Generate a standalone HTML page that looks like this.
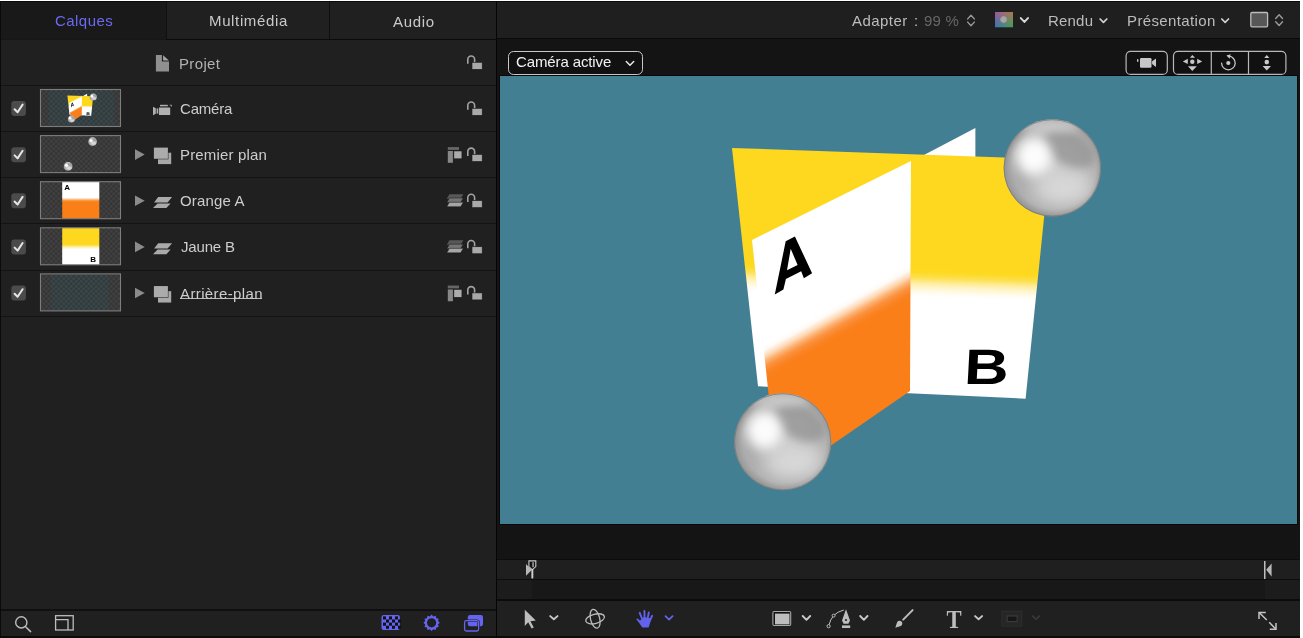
<!DOCTYPE html>
<html><head><meta charset="utf-8">
<style>
*{margin:0;padding:0;box-sizing:border-box}
html,body{width:1303px;height:638px;overflow:hidden;background:#fff}
body{font-family:"Liberation Sans",sans-serif;position:relative}
.a{position:absolute}
.t{position:absolute;white-space:nowrap;font-size:15px;line-height:15px;will-change:transform}
svg.s{position:absolute;left:0;top:0;overflow:visible}
</style></head><body>

<div class="a" style="left:0px;top:1px;width:1300px;height:637px;background:#0a0a0a;"></div>
<div class="a" style="left:1px;top:2px;width:495px;height:634px;background:#202020;"></div>
<div class="a" style="left:1px;top:2px;width:166px;height:38px;background:#191919;"></div>
<div class="a" style="left:1px;top:39px;width:166px;height:1px;background:#171717;"></div>
<div class="a" style="left:166px;top:2px;width:1px;height:38px;background:#101010;"></div>
<div class="a" style="left:329px;top:2px;width:1px;height:37px;background:#0e0e0e;"></div>
<div class="a" style="left:166px;top:39px;width:330px;height:1px;background:#0a0a0a;"></div>
<div class="t" style="left:54.7px;top:13.20px;color:#6a6af2;letter-spacing:0.45px;">Calques</div>
<div class="t" style="left:209px;top:13.40px;color:#c9c9c9;letter-spacing:0.64px;">Multimédia</div>
<div class="t" style="left:393px;top:13.50px;color:#c9c9c9;letter-spacing:0.68px;">Audio</div>
<div class="a" style="left:1px;top:85px;width:495px;height:1px;background:#131313;"></div>
<div class="a" style="left:1px;top:131px;width:495px;height:1px;background:#131313;"></div>
<div class="a" style="left:1px;top:177px;width:495px;height:1px;background:#131313;"></div>
<div class="a" style="left:1px;top:223px;width:495px;height:1px;background:#131313;"></div>
<div class="a" style="left:1px;top:270px;width:495px;height:1px;background:#131313;"></div>
<div class="a" style="left:1px;top:316px;width:495px;height:1px;background:#131313;"></div>
<div class="a" style="left:180px;top:298px;width:82px;height:1px;background:#b8b8b8;"></div>
<div class="t" style="left:179.2px;top:55.50px;color:#b2b2b2;letter-spacing:0.35px;">Projet</div>
<div class="t" style="left:180px;top:101.00px;color:#cdcdcd;letter-spacing:-0.2px;">Caméra</div>
<div class="t" style="left:179.7px;top:147.15px;color:#cdcdcd;letter-spacing:0.16px;">Premier plan</div>
<div class="t" style="left:180px;top:193.30px;color:#cdcdcd;letter-spacing:0.16px;">Orange A</div>
<div class="t" style="left:180.5px;top:239.45px;color:#cdcdcd;letter-spacing:-0.18px;">Jaune B</div>
<div class="t" style="left:179.8px;top:285.60px;color:#cdcdcd;letter-spacing:0.38px;">Arrière-plan</div>
<svg class="s" width="1303" height="638" viewBox="0 0 1303 638">
<defs>
<pattern id="chk" x="0" y="0" width="5" height="5" patternUnits="userSpaceOnUse">
<rect width="5" height="5" fill="#353535"/><rect width="2.5" height="2.5" fill="#404040"/><rect x="2.5" y="2.5" width="2.5" height="2.5" fill="#404040"/>
</pattern>
<pattern id="chkt" x="0" y="0" width="5" height="5" patternUnits="userSpaceOnUse">
<rect width="5" height="5" fill="#313b3e"/><rect width="2.5" height="2.5" fill="#3b4649"/><rect x="2.5" y="2.5" width="2.5" height="2.5" fill="#3b4649"/>
</pattern>

<linearGradient id="gB" gradientUnits="userSpaceOnUse" x1="975" y1="269" x2="974" y2="299">
  <stop offset="0" stop-color="#fdd81e"/><stop offset="0.15" stop-color="#fdd920"/><stop offset="0.35" stop-color="#fde050"/><stop offset="0.5" stop-color="#feeb94"/><stop offset="0.65" stop-color="#fff4c4"/><stop offset="0.85" stop-color="#fffcf0"/><stop offset="1" stop-color="#ffffff"/>
</linearGradient>
<linearGradient id="gA" gradientUnits="userSpaceOnUse" x1="828.8" y1="309.4" x2="843.2" y2="335.6">
  <stop offset="0" stop-color="#ffffff"/><stop offset="0.15" stop-color="#fffaf5"/><stop offset="0.35" stop-color="#fed7b3"/><stop offset="0.5" stop-color="#fcb070"/><stop offset="0.65" stop-color="#fb9240"/><stop offset="0.85" stop-color="#fa8220"/><stop offset="1" stop-color="#fa7f19"/>
</linearGradient>
<radialGradient id="gS" cx="0.52" cy="0.5" r="0.5">
  <stop offset="0" stop-color="#cdcdcd"/><stop offset="0.55" stop-color="#c4c4c4"/><stop offset="0.85" stop-color="#b4b4b4"/><stop offset="1" stop-color="#959595"/>
</radialGradient>
<filter id="bl5" x="-50%" y="-50%" width="200%" height="200%"><feGaussianBlur stdDeviation="4"/></filter>
<filter id="bl6" x="-50%" y="-50%" width="200%" height="200%"><feGaussianBlur stdDeviation="6"/></filter>
<filter id="bl8" x="-50%" y="-50%" width="200%" height="200%"><feGaussianBlur stdDeviation="8"/></filter>
<radialGradient id="gH" cx="0.5" cy="0.5" r="0.5">
  <stop offset="0" stop-color="#ffffff" stop-opacity="1"/><stop offset="0.5" stop-color="#ffffff" stop-opacity="0.6"/><stop offset="1" stop-color="#ffffff" stop-opacity="0"/>
</radialGradient>
<radialGradient id="gD" cx="0.5" cy="0.5" r="0.5">
  <stop offset="0" stop-color="#8a8a8a" stop-opacity="0.85"/><stop offset="0.6" stop-color="#9a9a9a" stop-opacity="0.5"/><stop offset="1" stop-color="#a0a0a0" stop-opacity="0"/>
</radialGradient>
<g id="panels">
<polygon points="975.4,128 975.4,166 903,166" fill="#ffffff"/>
<polygon points="732,148 1050,159 1025.6,398.7 758,386.3" fill="url(#gB)"/>
<polygon points="752,240 911,161 910,391 778,482" fill="url(#gA)"/>
<path fill-rule="evenodd" fill="#000" d="M785.7,241.3 L794.9,236.5 L812.1,273.3 L803.9,278.3 L801.2,271.2 L785.9,279 L783.4,289.6 L774.8,294.6 Z M790.7,248.8 L797.6,264.9 L787,270.2 Z"/>
<text x="0" y="0" font-family="Liberation Sans" font-weight="bold" font-size="49.7" fill="#000" transform="translate(963.4,384) scale(1.24,1) skewX(-2.5)">B</text>
</g><g id="spheres"><g id="sphA">
<clipPath id="cla"><circle cx="1052.3" cy="167.9" r="48.6"/></clipPath>
<circle cx="1052.3" cy="167.9" r="48.6" fill="url(#gS)"/>
<g clip-path="url(#cla)">
<ellipse cx="1065.91" cy="188.31" rx="26.73" ry="15.55" fill="#dcdcdc" filter="url(#bl8)" opacity="0.8"/>
<ellipse cx="1017.31" cy="177.62" rx="12.15" ry="21.87" fill="#a4a4a4" filter="url(#bl8)" opacity="0.6"/>
<ellipse cx="1069.80" cy="148.46" rx="28.19" ry="16.52" transform="rotate(28 1069.80 148.46)" fill="#929292" filter="url(#bl5)" opacity="0.75"/>
<ellipse cx="1047.44" cy="125.13" rx="34.02" ry="7.78" fill="#d2d2d2" filter="url(#bl5)" opacity="0.7"/>
<ellipse cx="1033.83" cy="156.24" rx="17.50" ry="18.47" fill="#ffffff" filter="url(#bl6)" opacity="0.95"/>
</g>
<circle cx="1052.3" cy="167.9" r="48.20" fill="none" stroke="#6a6a6a" stroke-width="0.8" opacity="0.7"/>
</g><g id="sphB">
<clipPath id="clb"><circle cx="782.7" cy="441.8" r="48.5"/></clipPath>
<circle cx="782.7" cy="441.8" r="48.5" fill="url(#gS)"/>
<g clip-path="url(#clb)">
<ellipse cx="796.28" cy="462.17" rx="26.68" ry="15.52" fill="#dcdcdc" filter="url(#bl8)" opacity="0.8"/>
<ellipse cx="747.78" cy="451.50" rx="12.12" ry="21.82" fill="#a4a4a4" filter="url(#bl8)" opacity="0.6"/>
<ellipse cx="800.16" cy="422.40" rx="28.13" ry="16.49" transform="rotate(28 800.16 422.40)" fill="#929292" filter="url(#bl5)" opacity="0.75"/>
<ellipse cx="777.85" cy="399.12" rx="33.95" ry="7.76" fill="#d2d2d2" filter="url(#bl5)" opacity="0.7"/>
<ellipse cx="764.27" cy="430.16" rx="17.46" ry="18.43" fill="#ffffff" filter="url(#bl6)" opacity="0.95"/>
</g>
<circle cx="782.7" cy="441.8" r="48.10" fill="none" stroke="#6a6a6a" stroke-width="0.8" opacity="0.7"/>
</g></g></defs>
<path d="M155.9 54.9 H161.9 V61.5 H169 V71.6 H155.9 Z" fill="#909090"/>
<path d="M163.1 55.3 L168.9 60.6 H163.1 Z" fill="#a6a6a6"/>
<path d="M467.8 63.8 V59.4 A3.4 3.4 0 0 1 474.6 59.4 V62.3" fill="none" stroke="#a2a2a2" stroke-width="1.6"/>
<rect x="472" y="62.3" width="10.2" height="7" fill="#a9a9a9" stroke="#1a1a1a" stroke-width="0.6"/>
<path d="M467.8 109.8 V105.39999999999999 A3.4 3.4 0 0 1 474.6 105.39999999999999 V108.3" fill="none" stroke="#a2a2a2" stroke-width="1.6"/>
<rect x="472" y="108.3" width="10.2" height="7" fill="#a9a9a9" stroke="#1a1a1a" stroke-width="0.6"/>
<rect x="11.3" y="101.00" width="14.6" height="15" rx="3" fill="#4b4b4b"/>
<path d="M14.6 109.20 L17.6 112.20 L22.6 104.60" fill="none" stroke="#e6e6e6" stroke-width="2" stroke-linecap="round" stroke-linejoin="round"/>
<rect x="40.5" y="89.50" width="80" height="37" fill="url(#chk)"/>
<path d="M467.8 155.95 V151.54999999999998 A3.4 3.4 0 0 1 474.6 151.54999999999998 V154.45" fill="none" stroke="#a2a2a2" stroke-width="1.6"/>
<rect x="472" y="154.45" width="10.2" height="7" fill="#a9a9a9" stroke="#1a1a1a" stroke-width="0.6"/>
<rect x="11.3" y="147.15" width="14.6" height="15" rx="3" fill="#4b4b4b"/>
<path d="M14.6 155.35 L17.6 158.35 L22.6 150.75" fill="none" stroke="#e6e6e6" stroke-width="2" stroke-linecap="round" stroke-linejoin="round"/>
<rect x="40.5" y="135.65" width="80" height="37" fill="url(#chk)"/>
<path d="M135 149.30 L144.7 154.60 L135 159.90 Z" fill="#8c8c8c"/>
<path d="M467.8 202.1 V197.7 A3.4 3.4 0 0 1 474.6 197.7 V200.6" fill="none" stroke="#a2a2a2" stroke-width="1.6"/>
<rect x="472" y="200.6" width="10.2" height="7" fill="#a9a9a9" stroke="#1a1a1a" stroke-width="0.6"/>
<rect x="11.3" y="193.30" width="14.6" height="15" rx="3" fill="#4b4b4b"/>
<path d="M14.6 201.50 L17.6 204.50 L22.6 196.90" fill="none" stroke="#e6e6e6" stroke-width="2" stroke-linecap="round" stroke-linejoin="round"/>
<rect x="40.5" y="181.80" width="80" height="37" fill="url(#chk)"/>
<path d="M135 195.45 L144.7 200.75 L135 206.05 Z" fill="#8c8c8c"/>
<path d="M467.8 248.25 V243.85 A3.4 3.4 0 0 1 474.6 243.85 V246.75" fill="none" stroke="#a2a2a2" stroke-width="1.6"/>
<rect x="472" y="246.75" width="10.2" height="7" fill="#a9a9a9" stroke="#1a1a1a" stroke-width="0.6"/>
<rect x="11.3" y="239.45" width="14.6" height="15" rx="3" fill="#4b4b4b"/>
<path d="M14.6 247.65 L17.6 250.65 L22.6 243.05" fill="none" stroke="#e6e6e6" stroke-width="2" stroke-linecap="round" stroke-linejoin="round"/>
<rect x="40.5" y="227.95" width="80" height="37" fill="url(#chk)"/>
<path d="M135 241.60 L144.7 246.90 L135 252.20 Z" fill="#8c8c8c"/>
<path d="M467.8 294.4 V290.0 A3.4 3.4 0 0 1 474.6 290.0 V292.9" fill="none" stroke="#a2a2a2" stroke-width="1.6"/>
<rect x="472" y="292.9" width="10.2" height="7" fill="#a9a9a9" stroke="#1a1a1a" stroke-width="0.6"/>
<rect x="11.3" y="285.60" width="14.6" height="15" rx="3" fill="#4b4b4b"/>
<path d="M14.6 293.80 L17.6 296.80 L22.6 289.20" fill="none" stroke="#e6e6e6" stroke-width="2" stroke-linecap="round" stroke-linejoin="round"/>
<rect x="40.5" y="274.10" width="80" height="37" fill="url(#chk)"/>
<path d="M135 287.75 L144.7 293.05 L135 298.35 Z" fill="#8c8c8c"/>
<path d="M153 106.8 L155.8 108.2 V113.8 L153 115.2 Z" fill="#b0b0b0"/>
<rect x="156.6" y="108.4" width="1.6" height="5.2" fill="#b0b0b0"/>
<rect x="158.9" y="107.5" width="11.3" height="7.6" rx="0.6" fill="#b0b0b0"/>
<rect x="160" y="104.8" width="7.8" height="1.5" fill="#b0b0b0"/>
<path d="M169 104.8 H172 V107 Z" fill="#8a8a8a"/>
<rect x="158" y="152.70" width="13.2" height="11.4" fill="#a8a8a8"/>
<rect x="153.4" y="147.10" width="15" height="12.2" fill="#202020"/>
<rect x="153.9" y="147.60" width="14" height="11.2" fill="#ababab"/>
<path d="M154.1 202.40 L158.2 197.00 H172.1 L167.6 202.40 Z" fill="#aaaaaa"/>
<path d="M153 208.00 L157.6 203.40 H170.6 L166.4 208.00 Z" fill="#aaaaaa"/>
<path d="M154.1 248.55 L158.2 243.15 H172.1 L167.6 248.55 Z" fill="#aaaaaa"/>
<path d="M153 254.15 L157.6 249.55 H170.6 L166.4 254.15 Z" fill="#aaaaaa"/>
<rect x="158" y="291.15" width="13.2" height="11.4" fill="#a8a8a8"/>
<rect x="153.4" y="285.55" width="15" height="12.2" fill="#202020"/>
<rect x="153.9" y="286.05" width="14" height="11.2" fill="#ababab"/>
<rect x="447.8" y="147.10" width="11.2" height="2.8" fill="#666"/>
<rect x="447.8" y="151.00" width="5.1" height="11.8" fill="#888"/>
<rect x="453.9" y="151.00" width="8" height="7.8" fill="#acacac" stroke="#151515" stroke-width="0.5"/>
<path d="M446.8 198.70 L449.4 194.20 H463.3 L460.7 198.70 Z" fill="#585858"/>
<path d="M446.8 202.50 L449.4 198.00 H463.3 L460.7 202.50 Z" fill="#747474" stroke="#1a1a1a" stroke-width="0.5"/>
<path d="M446.8 206.70 L449.4 202.20 H463.3 L460.7 206.70 Z" fill="#a6a6a6" stroke="#1a1a1a" stroke-width="0.5"/>
<path d="M446.8 244.85 L449.4 240.35 H463.3 L460.7 244.85 Z" fill="#585858"/>
<path d="M446.8 248.65 L449.4 244.15 H463.3 L460.7 248.65 Z" fill="#747474" stroke="#1a1a1a" stroke-width="0.5"/>
<path d="M446.8 252.85 L449.4 248.35 H463.3 L460.7 252.85 Z" fill="#a6a6a6" stroke="#1a1a1a" stroke-width="0.5"/>
<rect x="447.8" y="285.55" width="11.2" height="2.8" fill="#666"/>
<rect x="447.8" y="289.45" width="5.1" height="11.8" fill="#888"/>
<rect x="453.9" y="289.45" width="8" height="7.8" fill="#acacac" stroke="#151515" stroke-width="0.5"/>
<circle cx="21.3" cy="622.4" r="5.6" fill="none" stroke="#bdbdbd" stroke-width="1.4"/>
<path d="M25.6 626.8 L30.6 631.6" stroke="#bdbdbd" stroke-width="1.5" stroke-linecap="round"/>
<rect x="55.6" y="615.7" width="17.6" height="14.3" fill="none" stroke="#bdbdbd" stroke-width="1.3"/>
<path d="M55.6 619.7 H68 V630" fill="none" stroke="#bdbdbd" stroke-width="1.3"/>
<rect x="381.5" y="615" width="18.4" height="15" rx="2.2" fill="#6464f0"/>
<rect x="383.00" y="616.40" width="3" height="3.1" fill="#111"/>
<rect x="389.00" y="616.40" width="3" height="3.1" fill="#111"/>
<rect x="395.00" y="616.40" width="3" height="3.1" fill="#111"/>
<rect x="386.00" y="619.50" width="3" height="3.1" fill="#111"/>
<rect x="392.00" y="619.50" width="3" height="3.1" fill="#111"/>
<rect x="398.00" y="619.50" width="3" height="3.1" fill="#111"/>
<rect x="383.00" y="622.60" width="3" height="3.1" fill="#111"/>
<rect x="389.00" y="622.60" width="3" height="3.1" fill="#111"/>
<rect x="395.00" y="622.60" width="3" height="3.1" fill="#111"/>
<rect x="386.00" y="625.70" width="3" height="3.1" fill="#111"/>
<rect x="392.00" y="625.70" width="3" height="3.1" fill="#111"/>
<rect x="398.00" y="625.70" width="3" height="3.1" fill="#111"/>
<polygon points="439.80,622.80 437.98,624.51 438.70,626.90 436.27,627.47 435.70,629.90 433.31,629.18 431.60,631.00 429.89,629.18 427.50,629.90 426.93,627.47 424.50,626.90 425.22,624.51 423.40,622.80 425.22,621.09 424.50,618.70 426.93,618.13 427.50,615.70 429.89,616.42 431.60,614.60 433.31,616.42 435.70,615.70 436.27,618.13 438.70,618.70 437.98,621.09" fill="#6464f0"/>
<circle cx="431.6" cy="622.8" r="4.6" fill="#202020"/>
<rect x="467.8" y="615" width="15.2" height="11.2" rx="2.2" fill="#6464f0"/>
<rect x="464.6" y="620.6" width="14" height="10.4" rx="1.8" fill="none" stroke="#202020" stroke-width="2.4"/>
<rect x="464.6" y="620.6" width="14" height="10.4" rx="1.8" fill="none" stroke="#6464f0" stroke-width="1.3"/>
<rect x="48.8" y="89.8" width="65.2" height="36.7" fill="url(#chkt)"/>
<use href="#panels" transform="translate(48.6,89.6) scale(0.081)  translate(-500,-76)"/>
<g transform="translate(93.3,97) scale(0.074) translate(-1052.3,-167.9)"><use href="#sphA"/></g>
<g transform="translate(71.4,119.1) scale(0.074) translate(-782.7,-441.8)"><use href="#sphB"/></g>
<g transform="translate(92.6,141.6) scale(0.09) translate(-1052.3,-167.9)"><use href="#sphA"/></g>
<g transform="translate(68.1,166.4) scale(0.092) translate(-782.7,-441.8)"><use href="#sphB"/></g>
<defs><linearGradient id="tgA" x1="0" y1="0" x2="0" y2="1"><stop offset="0" stop-color="#fff"/><stop offset="0.43" stop-color="#fff"/><stop offset="0.52" stop-color="#fa8a2a"/><stop offset="0.56" stop-color="#fa7f19"/><stop offset="1" stop-color="#fa7f19"/></linearGradient>
<linearGradient id="tgB" x1="0" y1="0" x2="0" y2="1"><stop offset="0" stop-color="#fdd81e"/><stop offset="0.45" stop-color="#fdd81e"/><stop offset="0.54" stop-color="#fff5d0"/><stop offset="0.58" stop-color="#fff"/><stop offset="1" stop-color="#fff"/></linearGradient></defs>
<rect x="62.2" y="181.7" width="37.1" height="37" fill="url(#tgA)"/>
<text x="64.3" y="190.2" font-family="Liberation Sans" font-weight="bold" font-size="8" fill="#000">A</text>
<rect x="62.2" y="227.8" width="37.1" height="37" fill="url(#tgB)"/>
<text x="90.2" y="262.3" font-family="Liberation Sans" font-weight="bold" font-size="8" fill="#000">B</text>
<rect x="50.9" y="274.8" width="58" height="35.6" fill="url(#chkt)"/>
<rect x="40.5" y="89.50" width="80" height="37" fill="none" stroke="#7d7d7d" stroke-width="1.1"/>
<rect x="40.5" y="135.60" width="80" height="37" fill="none" stroke="#7d7d7d" stroke-width="1.1"/>
<rect x="40.5" y="181.70" width="80" height="37" fill="none" stroke="#7d7d7d" stroke-width="1.1"/>
<rect x="40.5" y="227.80" width="80" height="37" fill="none" stroke="#7d7d7d" stroke-width="1.1"/>
<rect x="40.5" y="273.90" width="80" height="37" fill="none" stroke="#7d7d7d" stroke-width="1.1"/>
</svg>
<div class="a" style="left:1px;top:609px;width:495px;height:2px;background:#101010;"></div>
<div class="a" style="left:496px;top:2px;width:1px;height:636px;background:#050505;"></div>
<div class="a" style="left:497px;top:2px;width:803px;height:36px;background:#1f1f1f;"></div>
<div class="a" style="left:497px;top:39px;width:803px;height:520px;background:#141414;"></div>
<div class="a" style="left:499px;top:75px;width:799px;height:450px;background:#0c0808;"></div>
<div class="a" style="left:500px;top:76px;width:797px;height:448px;background:#437f93;"></div>
<svg class="s" width="1303" height="638" viewBox="0 0 1303 638"><defs><clipPath id="cvclip"><rect x="500" y="76" width="797" height="448"/></clipPath></defs><g clip-path="url(#cvclip)"><use href="#panels"/><use href="#spheres"/></g></svg>
<div class="t" style="left:852px;top:13.40px;color:#bcbcbc;letter-spacing:0.45px;">Adapter</div>
<div class="t" style="left:913.5px;top:13.40px;color:#bcbcbc;letter-spacing:0px;">:</div>
<div class="t" style="left:923.5px;top:13.40px;color:#676767;letter-spacing:0.2px;">99 %</div>
<div class="t" style="left:1047.8px;top:13.10px;color:#bcbcbc;letter-spacing:0.2px;">Rendu</div>
<div class="t" style="left:1126.6px;top:13.10px;color:#bcbcbc;letter-spacing:0.38px;">Présentation</div>
<div class="a" style="left:508.4px;top:51px;width:134.8px;height:24px;border:1.4px solid #c8c8c8;border-radius:5.5px;background:#111"></div>
<div class="t" style="left:516.3px;top:54.40px;color:#f2f2f2;letter-spacing:-0.12px;">Caméra active</div>
<div class="a" style="left:497px;top:559px;width:803px;height:1px;background:#0c0c0c;"></div>
<div class="a" style="left:497px;top:560px;width:803px;height:19px;background:#1f1f1f;"></div>
<div class="a" style="left:497px;top:579px;width:803px;height:1px;background:#0c0c0c;"></div>
<div class="a" style="left:497px;top:580px;width:803px;height:19px;background:#181818;"></div>
<div class="a" style="left:497px;top:599px;width:803px;height:2px;background:#0c0c0c;"></div>
<div class="a" style="left:497px;top:601px;width:803px;height:35px;background:#202020;"></div>
<svg class="s" width="1303" height="638" viewBox="0 0 1303 638"><path d="M967.70 18.90 L971.00 15.20 L974.30 18.90 M967.70 22.10 L971.00 25.80 L974.30 22.10" fill="none" stroke="#9a9a9a" stroke-width="1.4" stroke-linecap="round" stroke-linejoin="round"/>
<defs><linearGradient id="sw1" x1="0" y1="0" x2="1" y2="0"><stop offset="0" stop-color="#9a5a98"/><stop offset="1" stop-color="#a87a4e"/></linearGradient><linearGradient id="sw2" x1="0" y1="0" x2="1" y2="0"><stop offset="0" stop-color="#3a74b8"/><stop offset="1" stop-color="#48a050"/></linearGradient><linearGradient id="swm" x1="0" y1="0" x2="0" y2="1"><stop offset="0" stop-color="#fff"/><stop offset="1" stop-color="#000"/></linearGradient><mask id="swmask"><rect x="995" y="12" width="18" height="15.3" fill="url(#swm)"/></mask><radialGradient id="swc" cx="0.5" cy="0.5" r="0.5"><stop offset="0" stop-color="#a8a8a8"/><stop offset="0.75" stop-color="#a2a2a2"/><stop offset="1" stop-color="#a2a2a2" stop-opacity="0"/></radialGradient></defs>
<rect x="995" y="12" width="18" height="15.3" fill="url(#sw2)"/>
<rect x="995" y="12" width="18" height="15.3" fill="url(#sw1)" mask="url(#swmask)"/>
<circle cx="1003.6" cy="19.5" r="3.8" fill="url(#swc)"/>
<path d="M1020.80 18.10 L1024.40 21.90 L1028.00 18.10" fill="none" stroke="#d8d8d8" stroke-width="2" stroke-linecap="round" stroke-linejoin="round"/>
<path d="M1100.10 19.00 L1103.45 22.40 L1106.80 19.00" fill="none" stroke="#d0d0d0" stroke-width="1.75" stroke-linecap="round" stroke-linejoin="round"/>
<path d="M1221.80 19.00 L1225.15 22.40 L1228.50 19.00" fill="none" stroke="#d0d0d0" stroke-width="1.75" stroke-linecap="round" stroke-linejoin="round"/>
<rect x="1250.8" y="12.5" width="16.8" height="14.3" rx="1.2" fill="#575757" stroke="#bdbdbd" stroke-width="1.3"/>
<path d="M1275.70 18.50 L1279.10 14.70 L1282.50 18.50 M1275.70 21.70 L1279.10 25.50 L1282.50 21.70" fill="none" stroke="#9a9a9a" stroke-width="1.4" stroke-linecap="round" stroke-linejoin="round"/>
<path d="M626.30 61.50 L630.00 65.30 L633.70 61.50" fill="none" stroke="#e8e8e8" stroke-width="1.5" stroke-linecap="round" stroke-linejoin="round"/>
<rect x="1126.1" y="51.4" width="41.2" height="23" rx="4.5" fill="#111" stroke="#b8b8b8" stroke-width="1.2"/>
<rect x="1173.5" y="51.4" width="112.4" height="23" rx="4.5" fill="#111" stroke="#b8b8b8" stroke-width="1.2"/>
<path d="M1211.3 51.4 V74.4 M1248.5 51.4 V74.4" stroke="#b8b8b8" stroke-width="1.2"/>
<rect x="1140" y="58" width="11.5" height="9.8" rx="1.2" fill="#c8c8c8"/>
<path d="M1152.1 61.2 L1156 58.4 V67.1 L1152.1 64 Z" fill="#c8c8c8"/>
<rect x="1137" y="59.2" width="1.4" height="2.6" fill="#c8c8c8"/>
<circle cx="1192.3" cy="61.8" r="2.2" fill="#c8c8c8"/>
<path d="M1189.9 57.8 L1192.3 55.1 L1195.1 57.8 Z M1188 66.3 L1192.3 71 L1196.8 66.3 Z M1187.8 58.8 L1182.8 61.5 L1187.8 64 Z M1197.2 58.8 L1202.2 61.5 L1197.2 64 Z" fill="#c8c8c8"/>
<circle cx="1228.3" cy="63" r="2.1" fill="#c8c8c8"/>
<path d="M1221.6 63.2 A6.8 6.8 0 1 0 1228.9 56.2" fill="none" stroke="#c8c8c8" stroke-width="1.3" stroke-linecap="round"/>
<path d="M1226.4 55.6 L1230.6 54.2 L1229.6 58.8 Z" fill="#c8c8c8"/>
<circle cx="1266.8" cy="62.1" r="2.3" fill="#c8c8c8"/>
<path d="M1264.2 57.9 L1266.8 54.9 L1269.3999999999999 57.9 Z M1262.6 65.9 L1266.8 70.5 L1271.0 65.9 Z" fill="#c8c8c8"/>
<rect x="497" y="580" width="35" height="19" fill="#1c1c1c"/>
<rect x="1265" y="580" width="35" height="19" fill="#1c1c1c"/>
<path d="M526 564 L531.8 570 L526 575.8 Z" fill="#b8b8b8"/>
<path d="M528.9 560.9 H535.8 V566.6 L532.3 569.8 L528.9 566.6 Z" fill="#151515" stroke="#c8c8c8" stroke-width="1.1"/>
<rect x="532.2" y="562.2" width="1.8" height="5" fill="#8a8a8a"/>
<rect x="531.4" y="568.8" width="1.9" height="9.8" rx="0.9" fill="#d0d0d0"/>
<rect x="1264" y="561" width="1.5" height="18" fill="#c0c0c0"/>
<path d="M1271.6 563.4 L1266.2 569.8 L1271.6 576.4 Z" fill="#b8b8b8"/>
<path d="M524.8 609.8 L535.8 620.6 L530.4 621.2 L533.8 627.6 L531.6 628.6 L528.2 622.2 L524.8 626 Z" fill="#bdbdbd"/>
<path d="M550.20 616.10 L553.85 619.30 L557.50 616.10" fill="none" stroke="#c8c8c8" stroke-width="1.9" stroke-linecap="round" stroke-linejoin="round"/>
<ellipse cx="595.1" cy="618.8" rx="9.6" ry="4.6" transform="rotate(-14 595.1 618.8)" fill="none" stroke="#bdbdbd" stroke-width="1.3"/>
<ellipse cx="595.1" cy="618.8" rx="9.6" ry="4.6" transform="rotate(76 595.1 618.8)" fill="none" stroke="#bdbdbd" stroke-width="1.3"/>
<path d="M640.2 620.5 L643 617.5 H646.5 L650 618.3 L651.4 619 L648.6 627.4 H642.3 L638.2 621.6 Z" fill="#6262ec"/>
<path d="M637.4 619.4 L641.6 623.6 M639.7 612.8 L642.2 619 M644.4 611 L644.6 618 M648.8 612.5 L647.6 618.5 M652.1 615.8 L649.8 620.5" stroke="#6262ec" stroke-width="1.9" stroke-linecap="round"/>
<path d="M665.50 616.10 L669.05 619.60 L672.60 616.10" fill="none" stroke="#6262ec" stroke-width="1.8" stroke-linecap="round" stroke-linejoin="round"/>
<rect x="772.9" y="611.5" width="17.8" height="14" rx="1.2" fill="#111" stroke="#a8a8a8" stroke-width="1.1"/>
<rect x="775" y="613.6" width="14.5" height="10.8" fill="#bdbdbd"/>
<path d="M802.70 616.00 L806.45 619.80 L810.20 616.00" fill="none" stroke="#c8c8c8" stroke-width="1.9" stroke-linecap="round" stroke-linejoin="round"/>
<path d="M828.5 626.2 Q830.5 619 833.6 615.6 Q837.5 611.6 843.8 610" fill="none" stroke="#bdbdbd" stroke-width="1"/>
<circle cx="828.6" cy="626.2" r="1.6" fill="#202020" stroke="#bdbdbd" stroke-width="1"/>
<circle cx="833.6" cy="615.6" r="1.5" fill="#202020" stroke="#bdbdbd" stroke-width="1"/>
<path d="M846 609.3 L850 620.4 L848.4 623.8 H843.6 L842 620.4 Z" fill="#bdbdbd"/>
<circle cx="846" cy="620" r="1.1" fill="#202020"/>
<rect x="842" y="625.4" width="8.2" height="2.6" fill="#bdbdbd"/>
<path d="M860.20 616.00 L863.85 619.80 L867.50 616.00" fill="none" stroke="#c8c8c8" stroke-width="1.9" stroke-linecap="round" stroke-linejoin="round"/>
<path d="M912.6 610.1 L903.2 619.6" stroke="#bdbdbd" stroke-width="2" stroke-linecap="round"/>
<path d="M895.3 627.7 L897.1 622.2 A2.75 2.75 0 1 1 900.8 625.9 Z" fill="#bdbdbd"/>
<text x="0" y="0" font-family="Liberation Serif" font-weight="bold" font-size="24.4" fill="#bdbdbd" transform="translate(946.4 627.5) scale(0.93 1)">T</text>
<path d="M975.10 616.10 L978.60 619.30 L982.10 616.10" fill="none" stroke="#c8c8c8" stroke-width="1.9" stroke-linecap="round" stroke-linejoin="round"/>
<rect x="1001.8" y="611.2" width="20" height="15" fill="#262626" stroke="#2e2e2e" stroke-width="1"/>
<rect x="1007.2" y="616" width="10" height="5.6" fill="#161616" stroke="#3a3a3a" stroke-width="1.2"/>
<path d="M1032.80 616.10 L1036.10 619.30 L1039.40 616.10" fill="none" stroke="#3a3a3a" stroke-width="1.6" stroke-linecap="round" stroke-linejoin="round"/>
<path d="M1259.4 612.7 L1266.8 620 M1269.2 622.3 L1275.8 629" stroke="#c4c4c4" stroke-width="1.5"/>
<path d="M1259 619 V612.5 H1265.8 M1276 622.9 V629.3 H1269.8" fill="none" stroke="#c4c4c4" stroke-width="1.5"/></svg>
</body></html>
